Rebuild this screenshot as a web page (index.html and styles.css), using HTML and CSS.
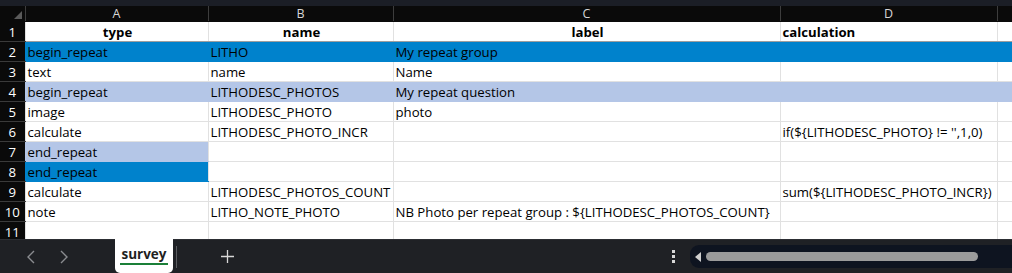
FILE: index.html
```html
<!DOCTYPE html>
<html lang="en">
  <head>
    <meta charset="UTF-8" />
    <title>survey</title>
    <link rel="stylesheet" href="styles.css">
  </head>
  <body>
    <div class="topstrip"></div>
    <div class="sheet">
      <table class="grid">
        <colgroup>
          <col class="c-num" /><col class="c-a" /><col class="c-b" /><col class="c-c" /><col class="c-d" /><col />
        </colgroup>
        <thead>
          <tr class="colhead">
            <th class="corner"><span class="tri"></span></th>
            <th>A</th><th>B</th><th>C</th><th>D</th><th></th>
          </tr>
        </thead>
        <tbody>
          <tr class="hdr">
            <th>1</th><td class="ctr">type</td><td class="ctr">name</td><td class="ctr">label</td><td>calculation</td><td></td>
          </tr>
          <tr class="dark">
            <th>2</th><td>begin_repeat</td><td>LITHO</td><td>My repeat group</td><td></td><td></td>
          </tr>
          <tr>
            <th>3</th><td>text</td><td>name</td><td>Name</td><td></td><td></td>
          </tr>
          <tr class="light">
            <th>4</th><td>begin_repeat</td><td>LITHODESC_PHOTOS</td><td>My repeat question</td><td></td><td></td>
          </tr>
          <tr>
            <th>5</th><td>image</td><td>LITHODESC_PHOTO</td><td>photo</td><td></td><td></td>
          </tr>
          <tr>
            <th>6</th><td>calculate</td><td>LITHODESC_PHOTO_INCR</td><td></td><td>if(${LITHODESC_PHOTO} != '',1,0)</td><td></td>
          </tr>
          <tr>
            <th>7</th><td class="light">end_repeat</td><td></td><td></td><td></td><td></td>
          </tr>
          <tr>
            <th>8</th><td class="dark">end_repeat</td><td></td><td></td><td></td><td></td>
          </tr>
          <tr>
            <th>9</th><td>calculate</td><td>LITHODESC_PHOTOS_COUNT</td><td></td><td>sum(${LITHODESC_PHOTO_INCR})</td><td></td>
          </tr>
          <tr>
            <th>10</th><td>note</td><td>LITHO_NOTE_PHOTO</td><td>NB Photo per repeat group : ${LITHODESC_PHOTOS_COUNT}</td><td></td><td></td>
          </tr>
          <tr>
            <th>11</th><td></td><td></td><td></td><td></td><td></td>
          </tr>
        </tbody>
      </table>
    </div>
    <div class="tabbar">
      <div class="nav">
        <svg width="10" height="14" viewBox="0 0 10 14"><path d="M8 1 L2 7 L8 13" fill="none" stroke="#8a8c90" stroke-width="1.4"/></svg>
        <svg width="10" height="14" viewBox="0 0 10 14"><path d="M2 1 L8 7 L2 13" fill="none" stroke="#8a8c90" stroke-width="1.4"/></svg>
      </div>
      <div class="tab"><span class="tab-name">survey</span></div>
      <div class="tabs-rest">
        <span class="sep"></span>
        <svg class="plus" width="13" height="13" viewBox="0 0 13 13"><path d="M6.5 0 V13 M0 6.5 H13" stroke="#d8d8d8" stroke-width="1.3"/></svg>
        <svg class="dots" width="3" height="13" viewBox="0 0 3 13"><rect x="0" y="0" width="3" height="3" fill="#d8d8d8"/><rect x="0" y="5" width="3" height="3" fill="#d8d8d8"/><rect x="0" y="10" width="3" height="3" fill="#d8d8d8"/></svg>
      </div>
      <div class="hscroll">
        <svg class="left" width="8" height="10" viewBox="0 0 8 10"><path d="M7 0 L1 5 L7 10 Z" fill="#cfcfcf"/></svg>
        <div class="thumb"></div>
      </div>
    </div>
  </body>
</html>
```

FILE: styles.css
```css
html, body {
  margin: 0;
  height: 100%;
}

body {
  display: flex;
  flex-direction: column;
  height: 273px;
  overflow: hidden;
  background: #ffffff;
  font-family: "Open Sans", "Liberation Sans", sans-serif;
}

.topstrip {
  height: 6px;
  background: #1b1e26;
  flex: none;
}

.sheet {
  flex: 1;
  overflow: hidden;
}

.grid {
  border-collapse: collapse;
  table-layout: fixed;
  width: 1020px;
  font-size: 13.2px;
  color: #000;
}

.c-num { width: 25px; }
.c-a { width: 183px; }
.c-b { width: 185px; }
.c-c { width: 387px; }
.c-d { width: 217px; }

.colhead th {
  height: 15px;
  padding: 0;
  background: #0a0a0a;
  color: #d6d6d6;
  font-weight: normal;
  font-size: 12.5px;
  line-height: 15px;
  overflow: visible;
  border-left: 1px solid #3d3d3d;
  border-bottom: 1px solid #0a0a0a;
}

.colhead th.corner {
  border-left: none;
  position: relative;
}

.tri {
  position: absolute;
  right: 3px;
  bottom: 2px;
  width: 0;
  height: 0;
  border-left: 8px solid transparent;
  border-bottom: 8px solid #5a5a5a;
}

tbody th {
  height: 17px;
  padding: 2px 0 0 0;
  line-height: 17px;
  background: #0a0a0a;
  color: #ffffff;
  font-weight: normal;
  font-size: 13.2px;
  text-align: center;
  border-bottom: 1px solid #3a3a3a;
}

tbody td {
  height: 17px;
  padding: 2px 0 0 2px;
  white-space: nowrap;
  overflow: visible;
  line-height: 17px;
  border-left: 1px solid #e1e1e1;
  border-bottom: 1px solid #e1e1e1;
}

.hdr td {
  font-weight: bold;
  border-bottom: 1px solid #9e9e9e;
}

.ctr {
  text-align: center;
}

.dark td,
td.dark {
  background: #0082cc;
  border-color: #0082cc;
}

.light td,
td.light {
  background: #b4c6e7;
  border-color: #b4c6e7;
}

.tabbar {
  flex: none;
  height: 34px;
  display: flex;
  align-items: stretch;
  background: #1f2125;
  border-top: 1px solid #2c2e33;
  box-sizing: border-box;
}

.nav {
  width: 115px;
  display: flex;
  align-items: center;
  gap: 23px;
  padding-left: 26px;
  box-sizing: border-box;
}

.tab {
  width: 58px;
  background: #ffffff;
  border-radius: 0 0 5px 5px;
  display: flex;
  justify-content: center;
  align-items: flex-start;
  padding-top: 7px;
  box-sizing: border-box;
  margin-top: -1px;
}

.tab-name {
  font-weight: bold;
  font-size: 13.5px;
  color: #1f1f1f;
  border-bottom: 2px solid #1a7f37;
  line-height: 17px;
  padding: 0 1px;
}

.tabs-rest {
  width: 517px;
  display: flex;
  align-items: center;
}

.sep {
  width: 1px;
  height: 22px;
  background: #5a5c60;
  margin-left: 3px;
}

.plus {
  margin-left: 44px;
}

.dots {
  margin-left: auto;
  margin-right: 15px;
}

.hscroll {
  flex: 1;
  display: flex;
  align-items: center;
  background: #0e1420;
  border-radius: 9px 0 0 9px;
  margin: 5px 0;
  padding-left: 4px;
  gap: 4px;
}

.thumb {
  width: 272px;
  height: 9px;
  border-radius: 5px;
  background: #9b9b9b;
}
```
